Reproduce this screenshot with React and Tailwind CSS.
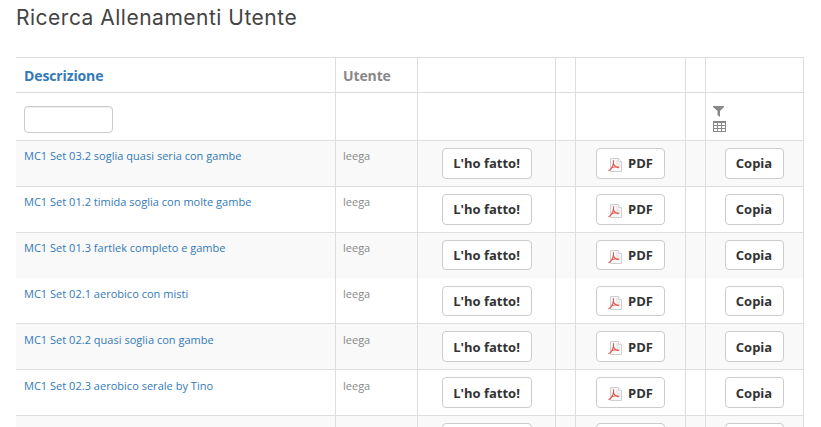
const rows = [
  { name: 'MC1 Set 03.2 soglia quasi seria con gambe', style: 'h-[46px] border-t bg-[#f9f9f9]', text: 'pt-[7px]', pad: 'pt-[7px]', btn: 'h-[31px] pb-px' },
  { name: 'MC1 Set 01.2 timida soglia con molte gambe', style: 'h-[46px] border-t bg-white', text: 'pt-[7px]', pad: 'pt-[7px]', btn: 'h-[31px] pb-px' },
  { name: 'MC1 Set 01.3 fartlek completo e gambe', style: 'h-[46px] border-t bg-[#f9f9f9]', text: 'pt-[7px]', pad: 'pt-[7px]', btn: 'h-[30px]' },
  { name: 'MC1 Set 02.1 aerobico con misti', style: 'h-[45px] bg-white', text: 'pt-2', pad: 'pt-2', btn: 'h-[30px]' },
  { name: 'MC1 Set 02.2 quasi soglia con gambe', style: 'h-[46px] border-t bg-[#f9f9f9]', text: 'pt-2', pad: 'pt-[7px]', btn: 'h-[31px]' },
  { name: 'MC1 Set 02.3 aerobico serale by Tino', style: 'h-[46px] border-t bg-white', text: 'pt-2', pad: 'pt-[7px]', btn: 'h-[31px]' },
];

const grid = 'grid grid-cols-[319px_82px_138px_20px_110px_20px_99px] border-[#ddd]';
const cell = 'border-l border-[#ddd]';

function Button({ className, children }) {
  return (
    <button className={`flex items-center justify-center rounded border border-[#ccc] bg-white text-[13px] leading-[18px] font-bold text-[#333] ${className}`}>
      {children}
    </button>
  );
}

function PdfIcon() {
  return (
    <svg width="14" height="14" viewBox="0 0 14 14" fill="none" className="mt-[3px] mr-[6px] shrink-0">
      <path d="M2.500.5h8l3 3v10h-11z" fill="#f9f9f9" stroke="#cfcfcf" />
      <path d="M8 2h2v2.500h2V9H8z" fill="#ececec" />
      <path d="M10.500.5v3h3" fill="#fff" stroke="#d4d4d4" />
      <path d="M5 2.200c1 .5.500 3-.1 5L3.400 10.400C2.500 11.800 1.500 12.600.4 12.700M3 10.200C5 9 8 8.200 11.300 9.300M5.300 5.500C6 7.500 7.500 9.200 10.500 9.600" stroke="#e4524e" strokeWidth="1.100" />
    </svg>
  );
}

function FilterIcon() {
  return (
    <svg width="12" height="12" viewBox="0 0 12 12" className="block">
      <path d="M0 0h11v1L7 5v6L4.500 9V5L0 1z" fill="#888" />
    </svg>
  );
}

function TableIcon() {
  return (
    <svg width="13" height="11" viewBox="0 0 13 11" className="block" shapeRendering="crispEdges">
      <path d="M0 0h13v11H0z" fill="#888" />
      <path d="M1 2h3v2H1zM5 2h3v2H5zM9 2h3v2H9zM1 5h3v2H1zM5 5h3v2H5zM9 5h3v2H9zM1 8h3v2H1zM5 8h3v2H5zM9 8h3v2H9z" fill="#fff" />
    </svg>
  );
}

export default function App() {
  return (
    <div className="h-[427px] w-[821px] overflow-hidden bg-white pl-4 font-['Open_Sans',sans-serif] text-[#888]">
      <h1 className="h-[57px] pt-[5px] font-['Inter',sans-serif] text-[21px] leading-[26px] tracking-[0.5px] whitespace-nowrap text-[#444]">
        Ricerca Allenamenti Utente
      </h1>
      <div className="w-[788px] border-r border-[#ddd]">
        <div className={`${grid} h-[35px] border-t text-[14px] leading-5 font-bold tracking-[-0.12px]`}>
          <div className="pt-2 pl-2 text-[#337ab7]">Descrizione</div>
          <div className={`${cell} pt-2 pl-[7px]`}>Utente</div>
          <div className={cell} />
          <div className={cell} />
          <div className={cell} />
          <div className={cell} />
          <div className={cell} />
        </div>
        <div className={`${grid} h-12 border-t`}>
          <div className="pt-[13px] pl-2">
            <input className="block h-[27px] w-[89px] rounded border border-[#ccc] bg-white px-2 text-[11px] shadow-[inset_0_1px_1px_rgba(0,0,0,0.075)] outline-none" />
          </div>
          <div className={cell} />
          <div className={cell} />
          <div className={cell} />
          <div className={cell} />
          <div className={cell} />
          <div className={`${cell} flex flex-col gap-[3px] pt-[13px] pl-[7px]`}>
            <FilterIcon />
            <TableIcon />
          </div>
        </div>
        {rows.map((r) => (
          <div key={r.name} className={`${grid} ${r.style}`}>
            <div className={`${r.text} pl-2 text-[11px] leading-4 tracking-[0.02px] text-[#337ab7]`}>{r.name}</div>
            <div className={`${cell} ${r.text} pl-[7px] text-[11px] leading-4`}>leega</div>
            <div className={`${cell} ${r.pad} pl-6`}>
              <Button className={`w-[90px] pr-px ${r.btn}`}>L'ho fatto!</Button>
            </div>
            <div className={cell} />
            <div className={`${cell} ${r.pad} pl-5`}>
              <Button className={`w-[69px] ${r.btn}`}>
                <PdfIcon />
                PDF
              </Button>
            </div>
            <div className={cell} />
            <div className={`${cell} ${r.pad} pl-[19px]`}>
              <Button className={`w-[59px] pr-px ${r.btn}`}>Copia</Button>
            </div>
          </div>
        ))}
        {/* Next row, only its top edge is in view */}
        <div className={`${grid} h-3 overflow-hidden border-t bg-[#f9f9f9]`}>
          <div />
          <div className={cell} />
          <div className={`${cell} pt-[7px] pl-6`}>
            <div className="h-[31px] w-[90px] rounded border border-[#ccc] bg-white" />
          </div>
          <div className={cell} />
          <div className={`${cell} pt-[7px] pl-5`}>
            <div className="h-[31px] w-[69px] rounded border border-[#ccc] bg-white" />
          </div>
          <div className={cell} />
          <div className={`${cell} pt-[7px] pl-[19px]`}>
            <div className="h-[31px] w-[59px] rounded border border-[#ccc] bg-white" />
          </div>
        </div>
      </div>
    </div>
  );
}
